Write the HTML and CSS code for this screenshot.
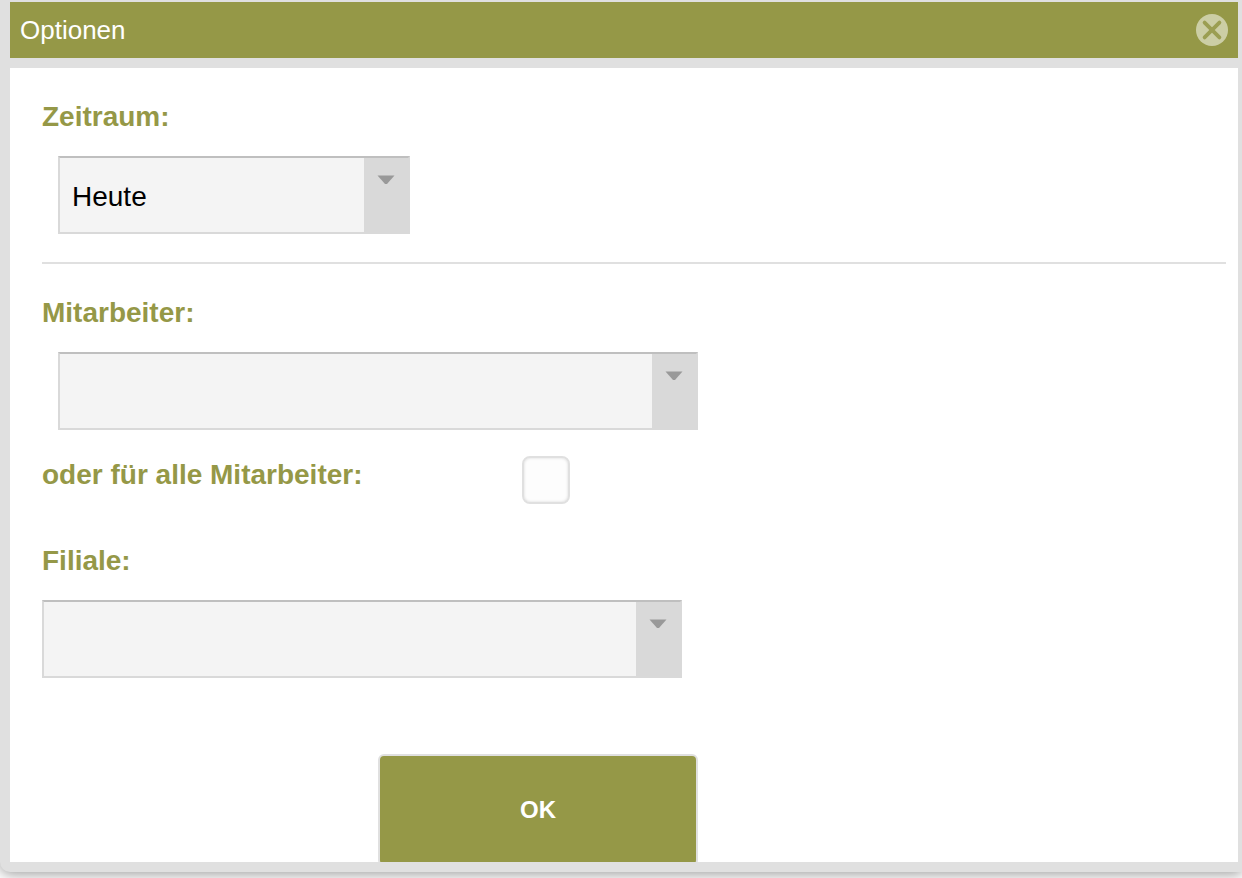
FILE: index.html
```html
<!DOCTYPE html>
<html lang="de">

<head>
    <meta charset="UTF-8">
    <title>Optionen</title>
    <link rel="stylesheet" href="styles.css">
</head>

<body>
    <div class="dialog" role="dialog" aria-labelledby="dialog-title">
        <div class="dialog-header">
            <h1 id="dialog-title">Optionen</h1>
            <button type="button" class="close" aria-label="Schließen">
                <svg viewBox="0 0 32 32" width="32" height="32">
                    <circle cx="16" cy="16" r="16" fill="#cccea5" />
                    <path d="M8.6 8.6L23.4 23.4M23.4 8.6L8.6 23.4" stroke="#9b9e52" stroke-width="3.8" stroke-linecap="round" />
                </svg>
            </button>
        </div>

        <form class="dialog-content">
            <div class="section">
                <label for="zeitraum">Zeitraum:</label>
                <div class="select small indent">
                    <select id="zeitraum">
                        <option>Heute</option>
                    </select>
                    <svg class="arrow" viewBox="0 0 18 10" width="18" height="10">
                        <path d="M0.5 0.5H17.5L10 9H8Z" fill="#999" />
                    </svg>
                </div>
            </div>

            <hr>

            <div class="section">
                <label for="mitarbeiter">Mitarbeiter:</label>
                <div class="select indent">
                    <select id="mitarbeiter">
                        <option></option>
                    </select>
                    <svg class="arrow" viewBox="0 0 18 10" width="18" height="10">
                        <path d="M0.5 0.5H17.5L10 9H8Z" fill="#999" />
                    </svg>
                </div>
            </div>

            <div class="check-row">
                <label for="alle">oder für alle Mitarbeiter:</label>
                <input type="checkbox" id="alle">
            </div>

            <div class="section">
                <label for="filiale">Filiale:</label>
                <div class="select">
                    <select id="filiale">
                        <option></option>
                    </select>
                    <svg class="arrow" viewBox="0 0 18 10" width="18" height="10">
                        <path d="M0.5 0.5H17.5L10 9H8Z" fill="#999" />
                    </svg>
                </div>
            </div>

            <div class="actions">
                <button type="submit" class="ok">OK</button>
            </div>
        </form>
    </div>
</body>

</html>
```

FILE: styles.css
```css
* {
    box-sizing: border-box;
}

body {
    font-family: "Liberation Sans", Arial, sans-serif;
    background-color: #fff;
    margin: 0;
    height: 100vh;
    padding-bottom: 6px;
    overflow: hidden;
}

.dialog {
    display: flex;
    flex-direction: column;
    gap: 10px;
    height: 100%;
    padding: 2px 4px 10px 10px;
    background-color: #e0e0e0;
    border-bottom-left-radius: 10px;
    box-shadow: 0 2px 14px rgba(0, 0, 0, 0.4);
}

.dialog-header {
    display: flex;
    justify-content: space-between;
    align-items: center;
    height: 56px;
    flex-shrink: 0;
    padding: 0 10px;
    background-color: #959847;
    color: #fff;
}

h1 {
    margin: 0;
    font-size: 26px;
    line-height: 32px;
    font-weight: normal;
}

.close {
    display: flex;
    padding: 0;
    border: none;
    background: none;
    cursor: pointer;
}

.dialog-content {
    flex: 1;
    min-height: 0;
    overflow: hidden;
    padding: 32px 12px 0 32px;
    background-color: #fff;
}

label {
    display: block;
    font-size: 28px;
    line-height: 34px;
    font-weight: bold;
    color: #959847;
}

.select {
    position: relative;
    width: 640px;
    max-width: 100%;
    margin-top: 22px;
}

.select.small {
    width: 352px;
}

.select.indent {
    margin-left: 16px;
}

select {
    appearance: none;
    display: block;
    width: 100%;
    height: 78px;
    padding: 2px 56px 0 12px;
    border: 2px solid #d9d9d9;
    border-top-color: #bfbfbf;
    border-radius: 0;
    background: linear-gradient(#d9d9d9, #d9d9d9) right / 44px 100% no-repeat #f4f4f4;
    font-family: inherit;
    font-size: 28px;
    color: #000;
}

.arrow {
    position: absolute;
    top: 19px;
    right: 15px;
    pointer-events: none;
}

hr {
    height: 2px;
    margin: 28px 0 32px;
    border: none;
    background-color: #e0e0e0;
}

.check-row {
    display: flex;
    align-items: flex-start;
    margin: 26px 0 40px;
}

.check-row label {
    width: 480px;
    padding-top: 2px;
}

input[type="checkbox"] {
    appearance: none;
    width: 48px;
    height: 48px;
    margin: 0;
    border: 2px solid #e0e0e0;
    border-radius: 8px;
    background-color: #fdfdfd;
    box-shadow: inset 0 0 3px rgba(0, 0, 0, 0.15);
}

input[type="checkbox"]:checked {
    background-color: #959847;
}

.actions {
    display: flex;
    justify-content: flex-end;
    width: 656px;
    max-width: 100%;
    margin-top: 76px;
}

.ok {
    width: 320px;
    height: 112px;
    border: 2px solid #e0e0e0;
    border-radius: 6px;
    background-color: #959847;
    color: #fff;
    font-family: inherit;
    font-size: 24px;
    font-weight: bold;
    cursor: pointer;
}
```
